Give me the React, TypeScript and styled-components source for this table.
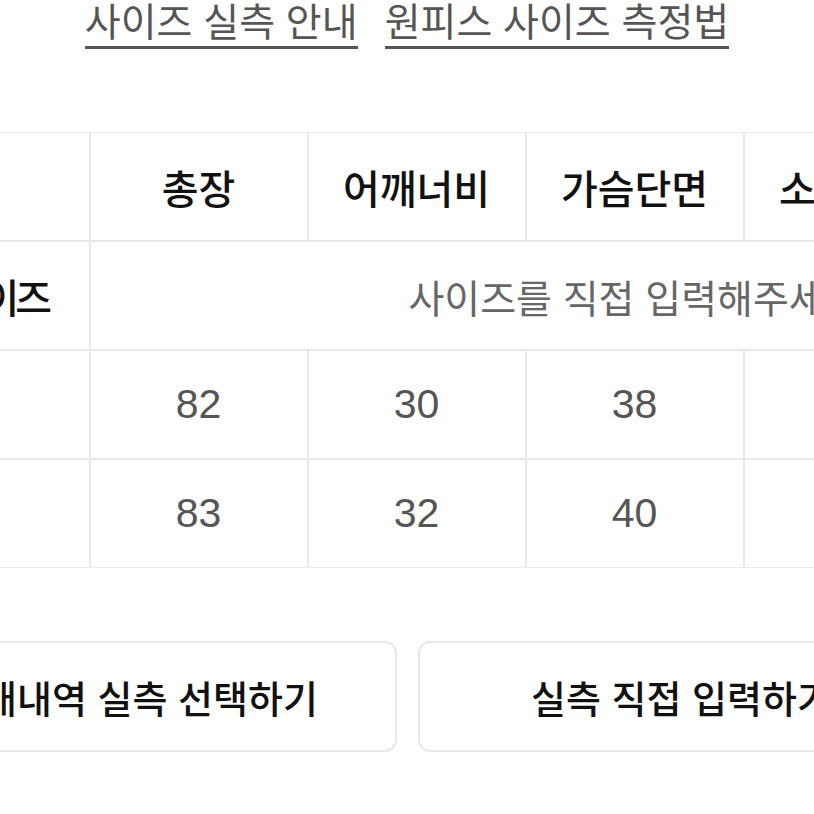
import React from "react";
import styled, { createGlobalStyle } from "styled-components";

const GlobalStyle = createGlobalStyle`
  html, body {
    margin: 0;
    padding: 0;
    background: #ffffff;
  }
  body {
    font-family: "Liberation Sans", "Noto Sans CJK KR", sans-serif;
    overflow: hidden;
  }
`;

const Viewport = styled.div`
  width: 100vw;
  display: flex;
  justify-content: center;
  overflow: hidden;
`;

const Page = styled.div`
  flex-shrink: 0;
  width: 1077px;
  display: flex;
  flex-direction: column;
`;

const LinkRow = styled.div`
  display: flex;
  justify-content: center;
  gap: 27px;
`;

const GuideLink = styled.a`
  display: inline-block;
  font-size: 39px;
  line-height: 46px;
  letter-spacing: 0;
  color: #555555;
  text-decoration: none;
  border-bottom: 3px solid #555555;
  cursor: pointer;
`;

const SizeGrid = styled.div`
  margin-top: 83px;
  display: grid;
  grid-template-columns: 221px repeat(5, 218px);
  grid-auto-rows: 109px;
  width: max-content;
`;

const Cell = styled.div<{ $head?: boolean; $span?: number; $muted?: boolean }>`
  box-sizing: border-box;
  border: 1px solid #e8e8e8;
  display: flex;
  align-items: center;
  justify-content: center;
  grid-column: ${(p) => (p.$span ? `span ${p.$span}` : "auto")};
  font-size: ${(p) => (p.$head ? "40px" : "39px")};
  font-weight: ${(p) => (p.$head ? 500 : 400)};
  color: ${(p) => (p.$muted ? "#666666" : "#111111")};
  white-space: nowrap;
`;

const LabelCell = styled(Cell)`
  letter-spacing: -4px;
`;

const UnitCell = styled(Cell)`
  font-size: 34px;
  font-weight: 400;
  letter-spacing: -1px;
`;

const NumberCell = styled(Cell)`
  font-size: 41px;
  font-weight: 400;
  color: #555555;
`;

const ButtonRow = styled.div`
  margin-top: 73px;
  display: grid;
  grid-template-columns: 1fr 1fr;
  gap: 21px;
`;

const ActionButton = styled.button`
  height: 111px;
  box-sizing: border-box;
  background: #ffffff;
  border: 2px solid #e8e8e8;
  border-radius: 12px;
  font-family: "Liberation Sans", "Noto Sans CJK KR", sans-serif;
  font-size: 38px;
  font-weight: 500;
  color: #111111;
  white-space: nowrap;
  cursor: pointer;
`;

const headers = ["총장", "어깨너비", "가슴단면", "소매길이", "밑단단면"];
const rows: { label: string; values: number[] }[] = [
  { label: "S", values: [82, 30, 38, 58, 50] },
  { label: "M", values: [83, 32, 40, 59, 52] },
];

export default function App() {
  return (
    <>
      <GlobalStyle />
      <Viewport>
        <Page>
          <LinkRow>
            <GuideLink>사이즈 실측 안내</GuideLink>
            <GuideLink>원피스 사이즈 측정법</GuideLink>
          </LinkRow>
          <SizeGrid>
            <UnitCell $head>cm</UnitCell>
            {headers.map((h) => (
              <Cell key={h} $head>
                {h}
              </Cell>
            ))}
            <LabelCell $head>내 사이즈</LabelCell>
            <Cell $span={5} $muted>
              사이즈를 직접 입력해주세요
            </Cell>
            {rows.map((r) => (
              <React.Fragment key={r.label}>
                <LabelCell $head>{r.label}</LabelCell>
                {r.values.map((v, i) => (
                  <NumberCell key={i}>{v}</NumberCell>
                ))}
              </React.Fragment>
            ))}
          </SizeGrid>
          <ButtonRow>
            <ActionButton>구매내역 실측 선택하기</ActionButton>
            <ActionButton>실측 직접 입력하기</ActionButton>
          </ButtonRow>
        </Page>
      </Viewport>
    </>
  );
}
